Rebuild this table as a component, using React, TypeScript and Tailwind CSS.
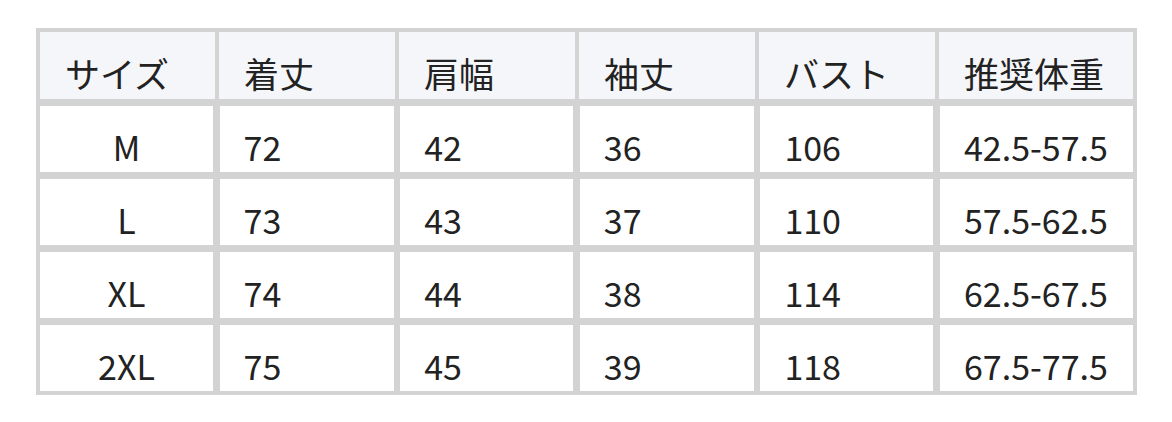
import React from 'react';

const headers = ['サイズ', '着丈', '肩幅', '袖丈', 'バスト', '推奨体重'];

const rows = [
    ['M', '72', '42', '36', '106', '42.5-57.5'],
    ['L', '73', '43', '37', '110', '57.5-62.5'],
    ['XL', '74', '44', '38', '114', '62.5-67.5'],
    ['2XL', '75', '45', '39', '118', '67.5-77.5'],
];

const App: React.FC = () => {
    return (
        <div
            className="w-[1172px] h-[422px] bg-white pt-[28px] pl-[36px]"
            style={{ fontFamily: '"Noto Sans CJK JP", "Noto Sans", sans-serif' }}
        >
            <div className="w-[1101px] bg-[#d3d3d3] p-[4px] text-[#222222]">
                {/* header row */}
                <div className="grid grid-cols-[175px_176px_176px_176px_176px_194px] gap-x-[4px] text-[35px]">
                    {headers.map((h) => (
                        <div
                            key={h}
                            className="h-[67px] bg-[#f5f6fa] flex items-end pl-[25px] pb-[9px] leading-[35px]"
                        >
                            {h}
                        </div>
                    ))}
                </div>
                {/* body rows */}
                <div className="mt-[7px] flex flex-col gap-y-[7px] text-[34px]">
                    {rows.map((row) => (
                        <div
                            key={row[0]}
                            className="grid grid-cols-[173px_174px_173px_174px_173px_193px] gap-x-[6.6px]"
                        >
                            {row.map((cell, i) => (
                                <div
                                    key={i}
                                    className={
                                        i === 0
                                            ? 'h-[66px] bg-white flex items-end justify-center pb-[8px] leading-[35px]'
                                            : 'h-[66px] bg-white flex items-end pl-[24px] pb-[8px] leading-[35px]'
                                    }
                                >
                                    {cell}
                                </div>
                            ))}
                        </div>
                    ))}
                </div>
            </div>
        </div>
    );
};

export default App;
